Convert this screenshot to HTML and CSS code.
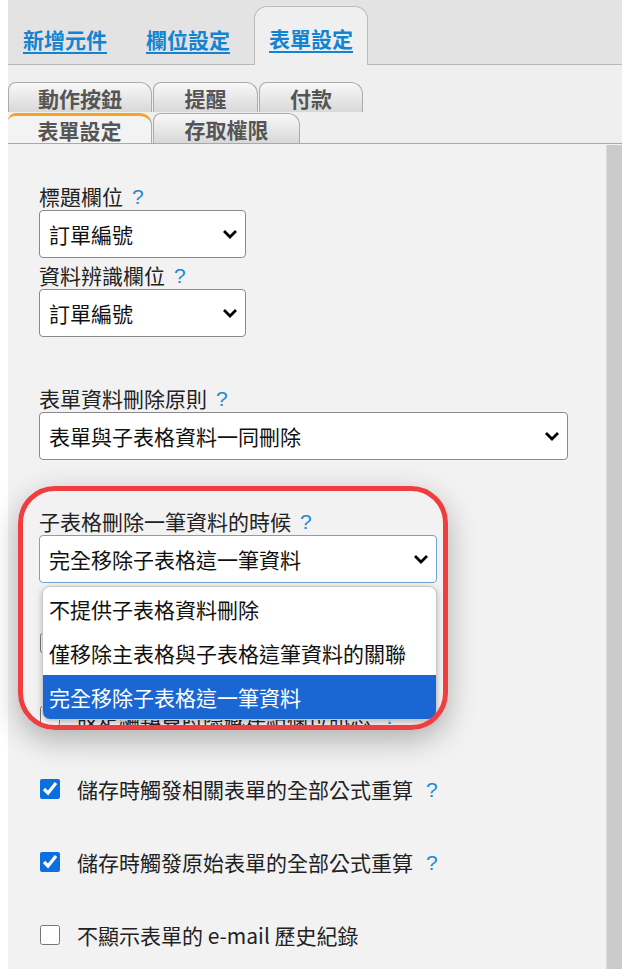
FILE: index.html
```html
<!DOCTYPE html>
<html lang="zh-Hant">
<head>
    <meta charset="UTF-8">
    <meta name="viewport" content="width=device-width, initial-scale=1.0">
    <title>表單設定</title>
    <link rel="stylesheet" href="styles.css">
</head>
<body>
    <div class="page">
        <nav class="top-tabs">
            <a class="top-tab" href="#">新增元件</a>
            <a class="top-tab" href="#">欄位設定</a>
            <a class="top-tab active" href="#">表單設定</a>
        </nav>

        <div class="sub-tabs">
            <div class="tab-row">
                <span class="sub-tab" style="width:144px">動作按鈕</span>
                <span class="sub-tab" style="width:105px">提醒</span>
                <span class="sub-tab" style="width:104px">付款</span>
            </div>
            <div class="tab-row">
                <span class="sub-tab current" style="width:144px">表單設定</span>
                <span class="sub-tab" style="width:147px">存取權限</span>
            </div>
        </div>

        <div class="panel">
            <main class="settings">
                <div class="group">
                    <div class="field">
                        <div class="label">標題欄位<span class="help">?</span></div>
                        <div class="select small">
                            <span>訂單編號</span>
                            <svg class="chevron" width="16" height="10" viewBox="0 0 16 10"><path d="M2 2 L8 8 L14 2" fill="none" stroke="#000" stroke-width="2.8"/></svg>
                        </div>
                    </div>
                    <div class="field">
                        <div class="label">資料辨識欄位<span class="help">?</span></div>
                        <div class="select small">
                            <span>訂單編號</span>
                            <svg class="chevron" width="16" height="10" viewBox="0 0 16 10"><path d="M2 2 L8 8 L14 2" fill="none" stroke="#000" stroke-width="2.8"/></svg>
                        </div>
                    </div>
                </div>

                <div class="group">
                    <div class="field">
                        <div class="label">表單資料刪除原則<span class="help">?</span></div>
                        <div class="select wide">
                            <span>表單與子表格資料一同刪除</span>
                            <svg class="chevron" width="16" height="10" viewBox="0 0 16 10"><path d="M2 2 L8 8 L14 2" fill="none" stroke="#000" stroke-width="2.8"/></svg>
                        </div>
                    </div>
                </div>

                <div class="group">
                    <div class="field highlight">
                        <div class="label">子表格刪除一筆資料的時候<span class="help">?</span></div>
                        <div class="select medium focused">
                            <span>完全移除子表格這一筆資料</span>
                            <svg class="chevron" width="16" height="10" viewBox="0 0 16 10"><path d="M2 2 L8 8 L14 2" fill="none" stroke="#000" stroke-width="2.8"/></svg>
                        </div>
                        <ul class="dropdown">
                            <li>不提供子表格資料刪除</li>
                            <li>僅移除主表格與子表格這筆資料的關聯</li>
                            <li class="selected">完全移除子表格這一筆資料</li>
                        </ul>
                        <div class="mark"></div>
                    </div>
                </div>

                <label class="check first">
                    <input type="checkbox">
                </label>
                <label class="check">
                    <input type="checkbox">
                    <span>設定編輯員時隱藏連結欄位訊息</span><span class="help">?</span>
                </label>
                <label class="check">
                    <input type="checkbox" checked>
                    <span>儲存時觸發相關表單的全部公式重算</span><span class="help">?</span>
                </label>
                <label class="check">
                    <input type="checkbox" checked>
                    <span>儲存時觸發原始表單的全部公式重算</span><span class="help">?</span>
                </label>
                <label class="check">
                    <input type="checkbox">
                    <span>不顯示表單的 e-mail 歷史紀錄</span>
                </label>
            </main>
            <div class="scrollbar"></div>
        </div>
    </div>
</body>
</html>
```

FILE: styles.css
```css
body {
    margin: 0;
    background-color: #fff;
    font-family: "Noto Sans CJK TC", "Noto Sans", sans-serif;
    font-size: 21px;
    color: #222;
}

.page {
    margin-left: 8px;
    min-height: 100vh;
    display: flex;
    flex-direction: column;
}

/* top level tabs */
.top-tabs {
    height: 65px;
    box-sizing: border-box;
    background-color: #e3e3e3;
    border-bottom: 1px solid #b7b7b7;
    display: flex;
    align-items: flex-end;
    gap: 9px;
}

.top-tab {
    width: 114px;
    height: 57px;
    box-sizing: border-box;
    display: flex;
    align-items: center;
    justify-content: center;
    padding-top: 4px;
    color: #1384d2;
    font-weight: 700;
    text-decoration: underline;
    text-underline-offset: 4px;
    margin-bottom: -1px;
}

.top-tab.active {
    height: 59px;
    background-color: #efefef;
    border: 1px solid #bcbcbc;
    border-bottom: none;
    border-radius: 13px 13px 0 0;
}

/* second level tabs */
.sub-tabs {
    background-color: #efefef;
    padding-top: 17px;
    border-bottom: 1px solid #a9a9a9;
}

.tab-row {
    display: flex;
    gap: 1px;
}

.tab-row + .tab-row {
    margin-top: 1px;
}

.sub-tab {
    height: 30px;
    box-sizing: border-box;
    display: flex;
    align-items: center;
    justify-content: center;
    color: #555;
    font-weight: 700;
    font-size: 21px;
    border: 1px solid #ababab;
    border-bottom: none;
    border-radius: 8px 12px 0 0;
    background: linear-gradient(#f8f8f8, #d8d8d8);
}

.sub-tab.current {
    background: #f3f3f3;
    border-top: 3px solid #f5a422;
    border-left: none;
}

/* settings panel */
.panel {
    flex: 1;
    display: flex;
    background-color: #f2f2f2;
}

.settings {
    flex: 1;
    padding: 38px 0 0 31px;
}

.scrollbar {
    width: 15px;
    margin-top: 1px;
    background-color: #cbcbcb;
    border-left: 1px solid #d9d9d9;
}

.group + .group {
    margin-top: 47px;
}

.field + .field {
    margin-top: 3px;
}

.label {
    height: 28px;
    display: flex;
    align-items: center;
}

.help {
    font-family: "Liberation Sans", Arial, sans-serif;
    line-height: 1;
    color: #1e8bd3;
    margin-left: 9px;
}

.select {
    height: 48px;
    box-sizing: border-box;
    background-color: #fff;
    border: 1px solid #8a8a8a;
    border-radius: 4px;
    display: flex;
    align-items: center;
    justify-content: space-between;
    padding: 0 7px 0 9px;
    color: #111;
}

.select.small { width: 207px; }
.select.wide { width: 529px; }
.select.medium { width: 398px; }

.select.focused {
    border-color: #6fa4d0;
}

.field.highlight {
    position: relative;
}

.dropdown {
    position: absolute;
    top: calc(100% + 3px);
    left: 3px;
    width: 393px;
    margin: 0;
    padding: 0;
    list-style: none;
    background-color: #fff;
    border: 1px solid #c9c9c9;
    border-radius: 8px;
    box-shadow: 0 2px 6px rgba(0, 0, 0, 0.25);
    overflow: hidden;
    z-index: 2;
}

.dropdown li {
    height: 44px;
    line-height: 44px;
    padding-left: 6px;
    color: #111;
}

.dropdown li.selected {
    background-color: #1a66d2;
    color: #fff;
}

/* red annotation box */
.mark {
    position: absolute;
    top: -21px;
    left: -21px;
    width: 430px;
    height: 244px;
    box-sizing: border-box;
    border: 5px solid #f03d40;
    border-radius: 37px;
    box-shadow: 0 10px 30px rgba(0, 0, 0, 0.28);
    z-index: 3;
}

/* checkbox rows */
.check {
    display: flex;
    align-items: center;
    height: 28px;
    margin-top: 45px;
}

.check.first {
    margin-top: 46px;
}

.check input {
    width: 20px;
    height: 20px;
    margin: 0 17px 0 1px;
    accent-color: #0b6fdf;
}

.check .help {
    margin-left: 13px;
}
```
